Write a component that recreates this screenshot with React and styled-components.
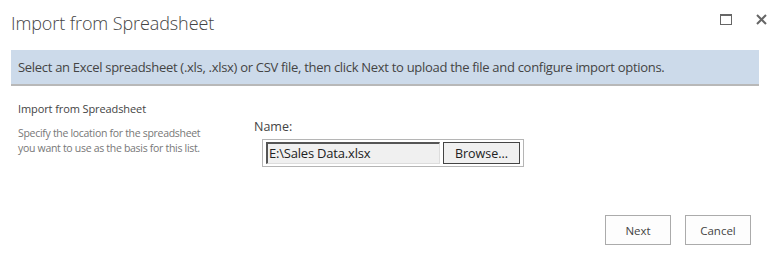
import React from 'react'
import styled, { createGlobalStyle } from 'styled-components'

const Global = createGlobalStyle`
  body {
    margin: 0;
    background: #fff;
    font-family: "Open Sans", "Liberation Sans", sans-serif;
    color: #444;
  }
`

const App = () => {
  return (
    <>
      <Global />
      <Dialog>
        <Header>
          <Title>Import from Spreadsheet</Title>
          <WindowControls>
            <IconButton aria-label="Maximize">
              <svg width="12" height="11" viewBox="0 0 12 11">
                <rect x="0.5" y="0.5" width="11" height="10" fill="none" stroke="#666" strokeWidth="1" />
                <rect x="0" y="0" width="12" height="2" fill="#666" />
              </svg>
            </IconButton>
            <IconButton aria-label="Close">
              <svg width="11" height="11" viewBox="0 0 11 11">
                <path d="M1 1 L10 10 M10 1 L1 10" stroke="#666" strokeWidth="2" />
              </svg>
            </IconButton>
          </WindowControls>
        </Header>
        <Banner>
          Select an Excel spreadsheet (.xls, .xlsx) or CSV file, then click Next to upload the file and configure import options.
        </Banner>
        <Body>
          <Section>
            <SectionTitle>Import from Spreadsheet</SectionTitle>
            <SectionText>
              Specify the location for the spreadsheet<br />you want to use as the basis for this list.
            </SectionText>
          </Section>
          <Field>
            <Label>Name:</Label>
            <FileBox>
              <FileInput>E:\Sales Data.xlsx</FileInput>
              <BrowseButton>Browse...</BrowseButton>
            </FileBox>
          </Field>
        </Body>
        <Footer>
          <Button>Next</Button>
          <Button>Cancel</Button>
        </Footer>
      </Dialog>
    </>
  )
}

export default App

const Dialog = styled.div`
  width: 777px;
  height: 275px;
  display: flex;
  flex-direction: column;
`
const Header = styled.div`
  display: flex;
  justify-content: space-between;
  align-items: flex-start;
  padding: 11px 10px 0 11px;
  height: 39px;
  box-sizing: border-box;
`
const Title = styled.div`
  font-size: 18px;
  font-weight: 300;
  color: #444;
  letter-spacing: -0.1px;
`
const WindowControls = styled.div`
  display: flex;
  gap: 23px;
  padding-top: 2px;
`
const IconButton = styled.div`
  width: 12px;
  height: 12px;
  display: flex;
  align-items: center;
  justify-content: center;
`
const Banner = styled.div`
  margin: 11px 18px 0 11px;
  height: 34px;
  background: #ccdaea;
  border-bottom: 2px solid #b8b8b8;
  padding: 0 7px;
  display: flex;
  align-items: center;
  font-size: 13px;
  color: #444;
  letter-spacing: -0.3px;
`
const Body = styled.div`
  display: flex;
  padding: 15px 0 0 18px;
`
const Section = styled.div`
  width: 236px;
  display: flex;
  flex-direction: column;
  gap: 10px;
`
const SectionTitle = styled.div`
  font-size: 11px;
  color: #444;
  letter-spacing: -0.1px;
`
const SectionText = styled.div`
  font-size: 10.5px;
  color: #777;
  line-height: 15px;
  letter-spacing: -0.3px;
`
const Field = styled.div`
  display: flex;
  flex-direction: column;
  padding-top: 17px;
`
const Label = styled.div`
  font-size: 12.5px;
  color: #444;
  margin-bottom: 4px;
`
const FileBox = styled.div`
  margin-left: 8px;
  width: 262px;
  height: 28px;
  border: 1px solid #b5b5b5;
  display: flex;
  align-items: center;
  padding: 0 3px;
  gap: 3px;
  box-sizing: border-box;
`
const FileInput = styled.div`
  width: 174px;
  height: 22px;
  box-sizing: border-box;
  background: #f0f0f0;
  border-top: 2px solid #555;
  border-left: 2px solid #555;
  border-right: 1px solid #ddd;
  border-bottom: 1px solid #ddd;
  font-size: 13px;
  color: #222;
  line-height: 19px;
  padding-left: 1px;
  letter-spacing: -0.2px;
`
const BrowseButton = styled.div`
  width: 77px;
  height: 22px;
  box-sizing: border-box;
  background: #f0f0f0;
  border: 1px solid #444;
  font-size: 12.5px;
  color: #222;
  display: flex;
  align-items: center;
  justify-content: center;
`
const Footer = styled.div`
  display: flex;
  justify-content: flex-end;
  gap: 14px;
  padding: 48px 26px 0 0;
`
const Button = styled.div`
  width: 66px;
  height: 30px;
  box-sizing: border-box;
  border: 1px solid #ababab;
  background: #fdfdfd;
  font-size: 11.5px;
  color: #444;
  display: flex;
  align-items: center;
  justify-content: center;
`
